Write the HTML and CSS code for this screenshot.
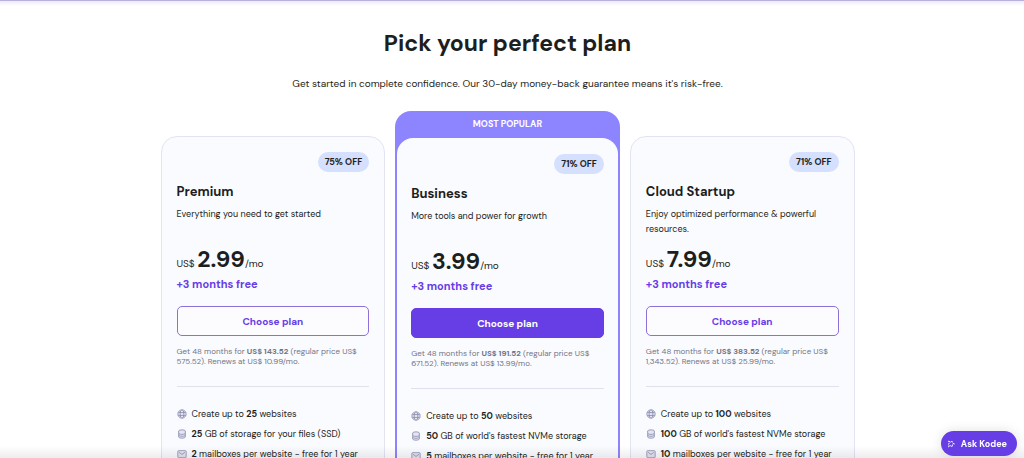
FILE: index.html
```html
<!DOCTYPE html>
<html lang="en">
<head>
    <meta charset="UTF-8">
    <meta name="viewport" content="width=device-width, initial-scale=1.0">
    <title>Pick your perfect plan</title>
    <link rel="stylesheet" href="styles.css">
</head>
<body>

    <!-- Shared icons -->
    <svg class="sprite" aria-hidden="true">
        <symbol id="icon-globe" viewBox="0 0 24 24">
            <circle cx="12" cy="12" r="10"/>
            <ellipse cx="12" cy="12" rx="4.5" ry="10"/>
            <path d="M3 8.5h18M3 15.5h18"/>
        </symbol>
        <symbol id="icon-storage" viewBox="0 0 24 24">
            <ellipse cx="12" cy="5" rx="8" ry="3"/>
            <path d="M4 5v14c0 1.700 3.600 3 8 3s8-1.300 8-3V5M4 10c0 1.700 3.600 3 8 3s8-1.300 8-3M4 14.500c0 1.700 3.600 3 8 3s8-1.300 8-3"/>
        </symbol>
        <symbol id="icon-mail" viewBox="0 0 24 24">
            <rect x="2" y="4" width="20" height="17" rx="2"/>
            <path d="M5 8l7 5 7-5"/>
        </symbol>
    </svg>

    <header class="top-bar"></header>

    <main class="pricing">
        <h1>Pick your perfect plan</h1>
        <p class="subtitle">Get started in complete confidence. Our 30-day money-back guarantee means it's risk-free.</p>

        <div class="plans">
            <!-- Premium -->
            <section class="plan">
                <div class="plan-body">
                    <span class="badge">75% OFF</span>
                    <h2>Premium</h2>
                    <p class="description">Everything you need to get started</p>
                    <p class="price">US$ <strong>2.99</strong>/mo</p>
                    <p class="bonus">+3 months free</p>
                    <button class="button" type="button">Choose plan</button>
                    <p class="terms">Get 48 months for <strong>US$ 143.52</strong> (regular price US$ 575.52). Renews at US$ 10.99/mo.</p>
                    <ul class="features">
                        <li><svg><use href="#icon-globe"/></svg><span>Create up to <strong>25</strong> websites</span></li>
                        <li><svg><use href="#icon-storage"/></svg><span><strong>25</strong> GB of storage for your files (SSD)</span></li>
                        <li><svg><use href="#icon-mail"/></svg><span><strong>2</strong> mailboxes per website - free for 1 year</span></li>
                    </ul>
                </div>
            </section>

            <!-- Business -->
            <section class="plan popular">
                <div class="ribbon">MOST POPULAR</div>
                <div class="plan-body">
                    <span class="badge">71% OFF</span>
                    <h2>Business</h2>
                    <p class="description">More tools and power for growth</p>
                    <p class="price">US$ <strong>3.99</strong>/mo</p>
                    <p class="bonus">+3 months free</p>
                    <button class="button filled" type="button">Choose plan</button>
                    <p class="terms">Get 48 months for <strong>US$ 191.52</strong> (regular price US$ 671.52). Renews at US$ 13.99/mo.</p>
                    <ul class="features">
                        <li><svg><use href="#icon-globe"/></svg><span>Create up to <strong>50</strong> websites</span></li>
                        <li><svg><use href="#icon-storage"/></svg><span><strong>50</strong> GB of world's fastest NVMe storage</span></li>
                        <li><svg><use href="#icon-mail"/></svg><span><strong>5</strong> mailboxes per website - free for 1 year</span></li>
                    </ul>
                </div>
            </section>

            <!-- Cloud Startup -->
            <section class="plan">
                <div class="plan-body">
                    <span class="badge">71% OFF</span>
                    <h2>Cloud Startup</h2>
                    <p class="description">Enjoy optimized performance &amp; powerful resources.</p>
                    <p class="price">US$ <strong>7.99</strong>/mo</p>
                    <p class="bonus">+3 months free</p>
                    <button class="button" type="button">Choose plan</button>
                    <p class="terms">Get 48 months for <strong>US$ 383.52</strong> (regular price US$ 1,343.52). Renews at US$ 25.99/mo.</p>
                    <ul class="features">
                        <li><svg><use href="#icon-globe"/></svg><span>Create up to <strong>100</strong> websites</span></li>
                        <li><svg><use href="#icon-storage"/></svg><span><strong>100</strong> GB of world's fastest NVMe storage</span></li>
                        <li><svg><use href="#icon-mail"/></svg><span><strong>10</strong> mailboxes per website - free for 1 year</span></li>
                    </ul>
                </div>
            </section>
        </div>
    </main>

    <div class="bottom-fade"></div>

    <button class="chat-button" type="button">
        <svg viewBox="0 0 24 24" aria-hidden="true">
            <path d="M5 3l6 4 4-4 1 6 6 3-6 3-1 6-4-4-6 4 2-7-3-2 3-2z" stroke-dasharray="7 3"/>
        </svg>
        Ask Kodee
    </button>

</body>
</html>
```
FILE: styles.css
```css
* {
    box-sizing: border-box;
}

body {
    font-family: "DM Sans", Inter, "Liberation Sans", sans-serif;
    font-size: 9px;
    color: #1d1e20;
    background-color: #fff;
    margin: 0;
    height: 100vh;
    overflow: hidden;
}

h1, h2, p, ul {
    margin: 0;
    padding: 0;
}

.sprite {
    display: none;
}

.top-bar {
    height: 5px;
    border-top: 1px solid #b9b0dc;
    background: linear-gradient(#eeebfa, #fafaff);
}

.pricing {
    padding: 22px 9px 0 0;
    text-align: center;
}

h1 {
    font-size: 23px;
    line-height: 32px;
}

.subtitle {
    margin-top: 17px;
    font-size: 10px;
    line-height: 16px;
}

.plans {
    display: grid;
    grid-template-columns: repeat(3, 1fr);
    gap: 10px;
    max-width: 694px;
    margin: 19px auto 0;
    text-align: left;
}

.plan {
    margin-top: 25px;
    border: 1px solid #e2e4f3;
    border-radius: 16px;
    background-color: #fafbff;
}

.plan-body {
    display: flex;
    flex-direction: column;
    padding: 15px 15px 40px;
}

.popular {
    margin-top: 0;
    border: 0;
    padding: 0 2px;
    background-color: #8c85ff;
}

.popular .plan-body {
    padding: 16px 14px 40px;
    border-radius: 16px 16px 0 0;
    background-color: #fafbff;
}

.ribbon {
    height: 27px;
    line-height: 27px;
    font-weight: bold;
    text-align: center;
    color: #fff;
}

.badge {
    align-self: flex-end;
    padding: 0 7px;
    border-radius: 10px;
    background-color: #d5dffe;
    line-height: 20px;
    font-weight: bold;
}

h2 {
    margin-top: 10px;
    font-size: 13px;
    line-height: 20px;
}

.description {
    min-height: 30px;
    margin-top: 5px;
    line-height: 15px;
}

.price {
    margin-top: 7px;
    font-size: 10px;
    line-height: 30px;
}

.price strong {
    font-size: 23px;
}

.bonus {
    margin-top: -3px;
    font-size: 11px;
    line-height: 16px;
    font-weight: bold;
    color: #673de6;
}

.button {
    height: 30px;
    margin-top: 14px;
    border: 1px solid #8d70d8;
    border-radius: 5px;
    background-color: #fcfcff;
    font-family: inherit;
    font-size: 10px;
    font-weight: bold;
    color: #673de6;
    cursor: pointer;
}

.button.filled {
    border-color: #673de6;
    background-color: #673de6;
    color: #fff;
}

.terms {
    margin-top: 10px;
    font-size: 8px;
    line-height: 10px;
    color: #727586;
}

.features {
    margin-top: 20px;
    padding-top: 17px;
    border-top: 1px solid #dfe1ec;
    list-style: none;
}

.features li {
    display: flex;
    align-items: center;
    gap: 5px;
    line-height: 20px;
    white-space: nowrap;
}

.features svg {
    width: 10px;
    height: 10px;
    fill: #e4e4f2;
    stroke: #8c8fae;
    stroke-width: 2;
}

.bottom-fade {
    position: fixed;
    left: 0;
    right: 0;
    bottom: 0;
    height: 12px;
    background: linear-gradient(rgba(0, 0, 0, 0), rgba(0, 0, 0, 0.07));
}

.chat-button {
    position: fixed;
    right: 7px;
    bottom: 2px;
    display: flex;
    align-items: center;
    gap: 6px;
    height: 25px;
    padding: 0 10px 0 6px;
    border: 0;
    border-radius: 13px;
    background-color: #673de6;
    box-shadow: 0 0 12px rgba(0, 0, 0, 0.12);
    font-family: inherit;
    font-size: 9px;
    font-weight: bold;
    color: #fff;
    cursor: pointer;
}

.chat-button svg {
    width: 8px;
    height: 8px;
    fill: none;
    stroke: #fff;
    stroke-width: 3;
}
```
